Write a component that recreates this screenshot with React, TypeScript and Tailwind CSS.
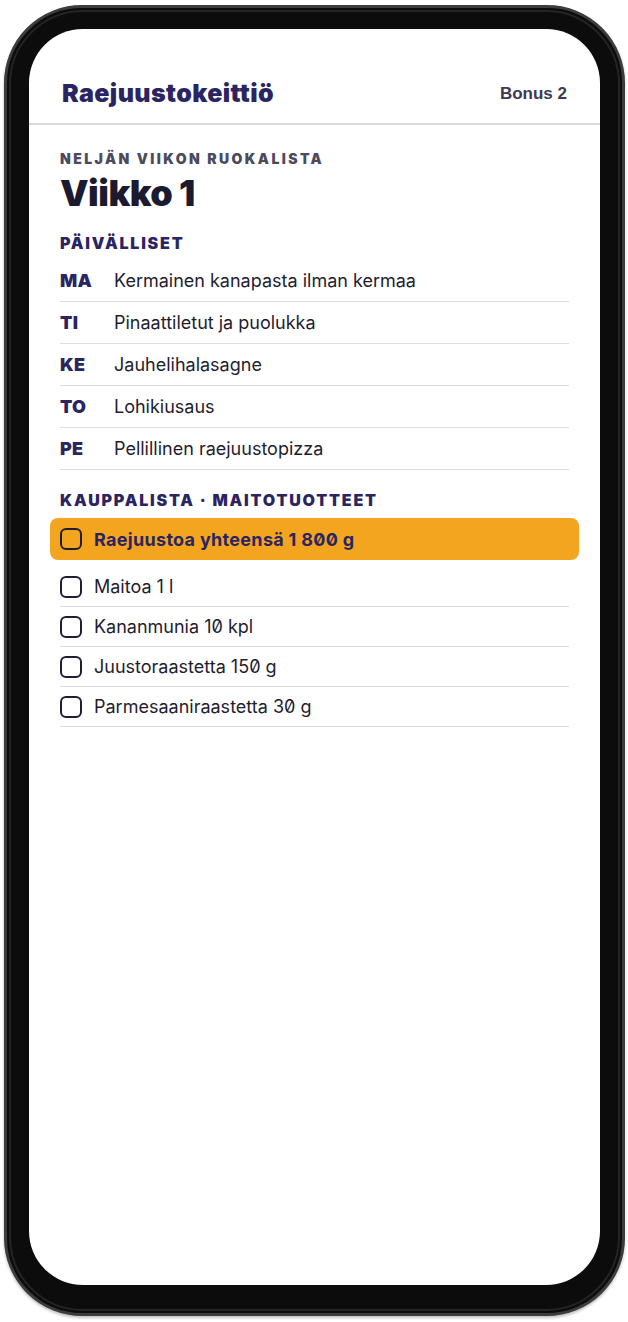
import React from "react";

const meals = [
  ["MA", "Kermainen kanapasta ilman kermaa"],
  ["TI", "Pinaattiletut ja puolukka"],
  ["KE", "Jauhelihalasagne"],
  ["TO", "Lohikiusaus"],
  ["PE", "Pellillinen raejuustopizza"],
];

const items = ["Maitoa 1 l", "Kananmunia 10 kpl", "Juustoraastetta 150 g", "Parmesaaniraastetta 30 g"];

function Box() {
  return <span className="block w-[22px] h-[22px] shrink-0 rounded-[6px] border-2 border-[#1f1d33]" />;
}

export default function App() {
  return (
    <div className="w-[628px] h-[1322px] bg-white pl-[4px] pt-[5px] font-['Inter',sans-serif]">
      <div className="w-[621px] h-[1311px] rounded-[78px] bg-[#0c0c0c] border-[3px] border-[#3c3c3c] p-[2px] shadow-[0_2px_3px_rgba(0,0,0,0.25)]">
        <div className="w-full h-full rounded-[74px] border-[2px] border-[#242424] pt-[17px] px-[18px] pb-[24px]">
          <div className="w-full h-full rounded-[54px] bg-white overflow-hidden flex flex-col">
            <header className="h-[96px] pt-[34px] px-[33px] flex items-center justify-between border-b-2 border-[#d8d8e0]">
              <span className="text-[25px] font-black tracking-[0.4px] text-[#2a2562] leading-none">Raejuustokeittiö</span>
              <span className="text-[17px] font-bold text-[#3b3a50] font-['Liberation_Sans',sans-serif] leading-none">Bonus 2</span>
            </header>
            <main className="px-[31px] pt-[25px]">
              <div className="text-[14px] leading-[18px] font-black tracking-[2.4px] text-[#4b4a5f]">NELJÄN VIIKON RUOKALISTA</div>
              <h1 className="mt-[5px] text-[36px] leading-[40px] font-black tracking-[-0.5px] text-[#1b1a30]">Viikko 1</h1>
              <h2 className="mt-[20px] text-[16px] leading-[20px] font-black tracking-[1.8px] text-[#2a2562]">PÄIVÄLLISET</h2>
              <ul className="mt-[7px]">
                {meals.map(([d, m]) => (
                  <li key={d} className="h-[42px] flex items-center border-b border-[#dcdce3] text-[18px]">
                    <span className="w-[54px] text-[18px] font-black tracking-[0.3px] text-[#2a2562]">{d}</span>
                    <span className="text-[#1f1d30]">{m}</span>
                  </li>
                ))}
              </ul>
              <h2 className="mt-[20px] text-[16px] leading-[20px] font-black tracking-[1.8px] text-[#2a2562]">KAUPPALISTA · MAITOTUOTTEET</h2>
              <div className="mt-[8px] -mx-[10px] px-[10px] h-[42px] rounded-[8px] bg-[#f4a520] flex items-center gap-[12px]">
                <Box />
                <span className="text-[18px] font-bold tracking-[0.3px] text-[#2a2562] slashed-zero">Raejuustoa yhteensä 1 800 g</span>
              </div>
              <ul className="mt-[7px]">
                {items.map((t) => (
                  <li key={t} className="h-[40px] flex items-center gap-[12px] border-b border-[#dcdce3]">
                    <Box />
                    <span className="text-[18px] text-[#1f1d30] slashed-zero">{t}</span>
                  </li>
                ))}
              </ul>
            </main>
          </div>
        </div>
      </div>
    </div>
  );
}
